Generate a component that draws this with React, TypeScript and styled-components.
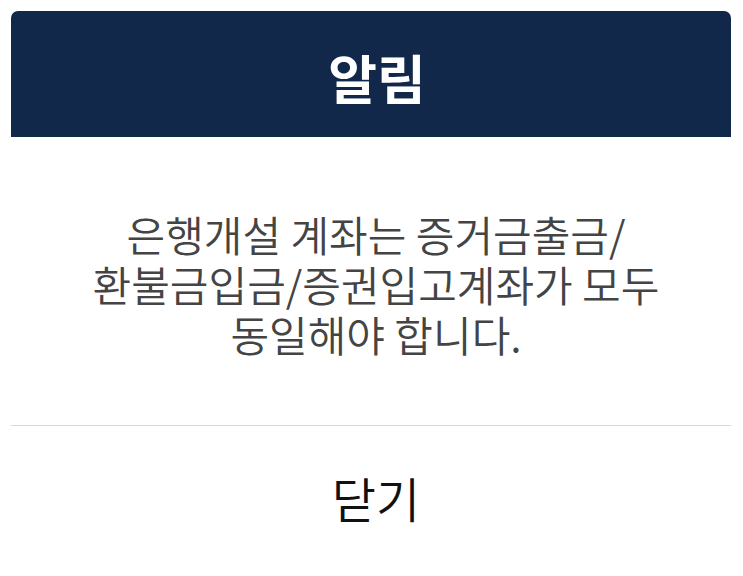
import React from "react";
import styled, { createGlobalStyle } from "styled-components";

const GlobalStyle = createGlobalStyle`
  body {
    margin: 0;
    background-color: #ffffff;
    font-family: "Noto Sans CJK KR", "Noto Sans", sans-serif;
  }
`;

const PageWrap = styled.div`
  padding: 11px 12px 0 11px;
`;

const AlertBox = styled.div`
  display: flex;
  flex-direction: column;
  background-color: #ffffff;
  border-radius: 7px 7px 0 0;
  overflow: hidden;
`;

const AlertHeader = styled.div`
  display: flex;
  justify-content: center;
  align-items: center;
  height: 126px;
  padding: 6px 0 0 12px;
  box-sizing: border-box;
  background-color: #11284a;
`;

const AlertTitle = styled.h1`
  margin: 0;
  font-size: 53px;
  font-weight: 700;
  color: #ffffff;
`;

const AlertMessage = styled.p`
  margin: 0;
  padding: 72px 6px 66px 16px;
  font-size: 42px;
  font-weight: 350;
  line-height: 50px;
  text-align: center;
  color: #444444;
  border-bottom: 1px solid #d8d8d8;
`;

const CloseBtn = styled.button`
  height: 136px;
  padding: 6px 0 0 10px;
  border: none;
  background: none;
  font-family: inherit;
  font-size: 48px;
  font-weight: 350;
  color: #111111;
  cursor: pointer;
`;

const App = () => {
  return (
    <PageWrap>
      <GlobalStyle />
      <AlertBox>
        <AlertHeader>
          <AlertTitle>알림</AlertTitle>
        </AlertHeader>
        <AlertMessage>
          은행개설 계좌는 증거금출금/
          <br />
          환불금입금/증권입고계좌가 모두
          <br />
          동일해야 합니다.
        </AlertMessage>
        <CloseBtn>닫기</CloseBtn>
      </AlertBox>
    </PageWrap>
  );
};

export default App;
